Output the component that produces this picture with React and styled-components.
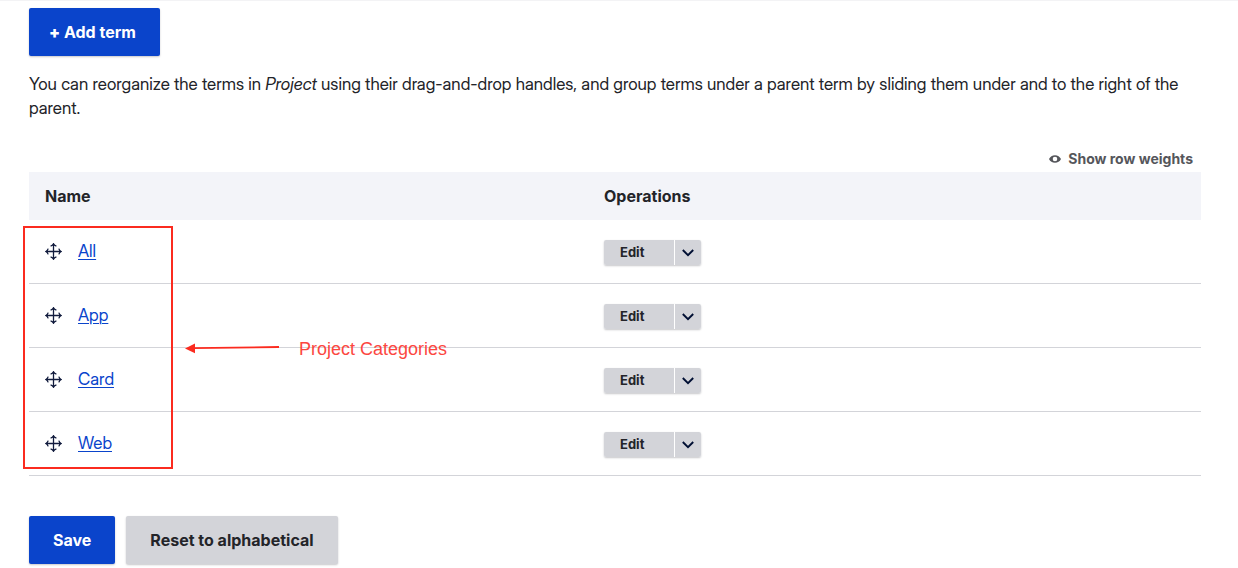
import React from "react";
import styled, { createGlobalStyle } from "styled-components";

const GlobalStyle = createGlobalStyle`
  *, *::before, *::after { box-sizing: border-box; }
  body {
    margin: 0;
    background: #fff;
    color: #232429;
    font: 17px/24px "Inter Display", Inter, "Liberation Sans", sans-serif;
  }
`;

const Page = styled.main`
  border-top: 1px solid #f3f3f5;
  padding: 7px 37px 4px 29px;
`;

const Button = styled.button`
  height: 48px;
  padding: 0 24px 0 ${(p) => (p.$compact ? 20 : 24)}px;
  border: 0;
  border-radius: 2px;
  background: ${(p) => (p.$primary ? "#0a44cb" : "#d3d4d9")};
  color: ${(p) => (p.$primary ? "#fff" : "#232429")};
  box-shadow: 0 1px 2px rgba(34, 35, 48, 0.25);
  font: 700 16px/24px Inter, "Liberation Sans", sans-serif;
  cursor: pointer;
`;

const Plus = styled.span`
  font-weight: 900;
`;

const Help = styled.p`
  margin: 16px 0 28px;
`;

const ToggleBar = styled.div`
  display: flex;
  justify-content: flex-end;
  padding-right: 8px;
`;

const WeightToggle = styled.button`
  display: flex;
  align-items: center;
  gap: 7px;
  height: 24px;
  padding: 0 0 2px;
  border: 0;
  background: none;
  color: #55565b;
  font: 700 14px/22px Inter, "Liberation Sans", sans-serif;
  cursor: pointer;
`;

const TableArea = styled.div`
  position: relative;
`;

const TermTable = styled.table`
  width: 100%;
  table-layout: fixed;
  border-collapse: separate;
  border-spacing: 0;
`;

const HeadCell = styled.th`
  width: ${(p) => p.$width || "auto"};
  height: 48px;
  padding: 0 16px;
  background: #f3f4f9;
  text-align: left;
  font: 700 16px/24px Inter, "Liberation Sans", sans-serif;
`;

const Cell = styled.td`
  height: 64px;
  padding: 0 16px 1px;
  border-bottom: 1px solid #d3d4d9;
`;

const NameGroup = styled.div`
  display: flex;
  align-items: center;
  gap: 16px;
`;

const Handle = styled.button`
  display: flex;
  padding: 0;
  border: 0;
  background: none;
  cursor: move;
`;

const TermLink = styled.a`
  color: #0a44cb;
  text-decoration: underline;
  text-decoration-thickness: 1px;
  text-underline-offset: 2px;
`;

const DropButton = styled.div`
  display: flex;
  gap: 1px;
  width: 97px;
  height: 25px;
  margin-top: 3px;
  border-radius: 2px;
  box-shadow: 0 1px 2px rgba(34, 35, 48, 0.25);
  background: #fff;
`;

const EditButton = styled.button`
  flex: 1;
  padding: 0 16px 1px;
  border: 0;
  border-radius: 2px 0 0 2px;
  background: #d3d4d9;
  color: #232429;
  text-align: left;
  font: 700 13px/24px Inter, "Liberation Sans", sans-serif;
  cursor: pointer;
`;

const MoreButton = styled.button`
  display: flex;
  align-items: center;
  justify-content: center;
  width: 26px;
  padding: 0;
  border: 0;
  border-radius: 0 2px 2px 0;
  background: #d3d4d9;
  cursor: pointer;
`;

const Outline = styled.div`
  position: absolute;
  top: 54px;
  bottom: 7px;
  left: -6px;
  width: 150px;
  border: 2px solid #fb2b1f;
  pointer-events: none;
`;

const Callout = styled.div`
  position: absolute;
  top: 165px;
  left: 156px;
  display: flex;
  align-items: center;
  gap: 20px;
  color: #fc4640;
  font: 18px/24px "Liberation Sans", sans-serif;
  pointer-events: none;
`;

const Actions = styled.div`
  display: flex;
  gap: 11px;
  margin-top: 40px;
`;

const MoveIcon = () => (
  <svg width="17" height="17" viewBox="0 0 17 17" fill="none" stroke="#111b3d" strokeWidth="1.3" aria-hidden="true">
    <path d="M8.5 .8v15.4M.8 8.5h15.4M5.6 3.200C7.200 2.700 8 1.800 8.500.8 9 1.800 9.800 2.700 11.400 3.200M5.600 13.800c1.600.5 2.400 1.400 2.900 2.400.5-1 1.300-1.900 2.900-2.400M3.200 5.600C2.700 7.200 1.800 8 .8 8.500c1 .5 1.900 1.300 2.400 2.900M13.800 5.600c.5 1.600 1.400 2.400 2.400 2.900-1 .5-1.900 1.300-2.400 2.900" />
  </svg>
);

const EyeIcon = () => (
  <svg width="12" height="8" viewBox="0 0 12 8" aria-hidden="true">
    <path fill="#55565b" fillRule="evenodd" d="M0 4C1.200 1.500 3.300.2 6 .2S10.800 1.500 12 4C10.800 6.500 8.700 7.800 6 7.800S1.200 6.500 0 4ZM6 1.700a2.300 2.300 0 1 0 0 4.600 2.300 2.300 0 0 0 0-4.600Z" />
  </svg>
);

const ChevronIcon = () => (
  <svg width="12" height="8" viewBox="0 0 12 8" fill="none" stroke="#000f33" strokeWidth="1.900" aria-hidden="true">
    <path d="m.8 1 5.200 5.200L11.200 1" />
  </svg>
);

const ArrowIcon = () => (
  <svg width="94" height="14" viewBox="0 0 94 14" aria-hidden="true">
    <path d="M8 6.200 94 5" stroke="#fb2b1f" strokeWidth="1.800" />
    <path d="m0 6.400 10-5v9.800Z" fill="#fb2b1f" />
  </svg>
);

const terms = ["All", "App", "Card", "Web"];

export default function App() {
  return (
    <>
      <GlobalStyle />
      <Page>
        <Button type="button" $primary $compact><Plus>+</Plus> Add term</Button>
        <Help>
          You can reorganize the terms in <em>Project</em> using their drag-and-drop handles, and group terms
          under a parent term by sliding them under and to the right of the parent.
        </Help>
        <ToggleBar>
          <WeightToggle type="button"><EyeIcon />Show row weights</WeightToggle>
        </ToggleBar>
        <TableArea>
          <TermTable>
            <thead>
              <tr>
                <HeadCell scope="col" $width="47.7%">Name</HeadCell>
                <HeadCell scope="col">Operations</HeadCell>
              </tr>
            </thead>
            <tbody>
              {terms.map((term) => (
                <tr key={term}>
                  <Cell>
                    <NameGroup>
                      <Handle type="button" aria-label={`Move ${term}`}><MoveIcon /></Handle>
                      <TermLink href="#">{term}</TermLink>
                    </NameGroup>
                  </Cell>
                  <Cell>
                    <DropButton>
                      <EditButton type="button">Edit</EditButton>
                      <MoreButton type="button" aria-label={`More actions for ${term}`}><ChevronIcon /></MoreButton>
                    </DropButton>
                  </Cell>
                </tr>
              ))}
            </tbody>
          </TermTable>
          <Outline />
          <Callout><ArrowIcon />Project Categories</Callout>
        </TableArea>
        <Actions>
          <Button type="submit" $primary>Save</Button>
          <Button type="button">Reset to alphabetical</Button>
        </Actions>
      </Page>
    </>
  );
}
